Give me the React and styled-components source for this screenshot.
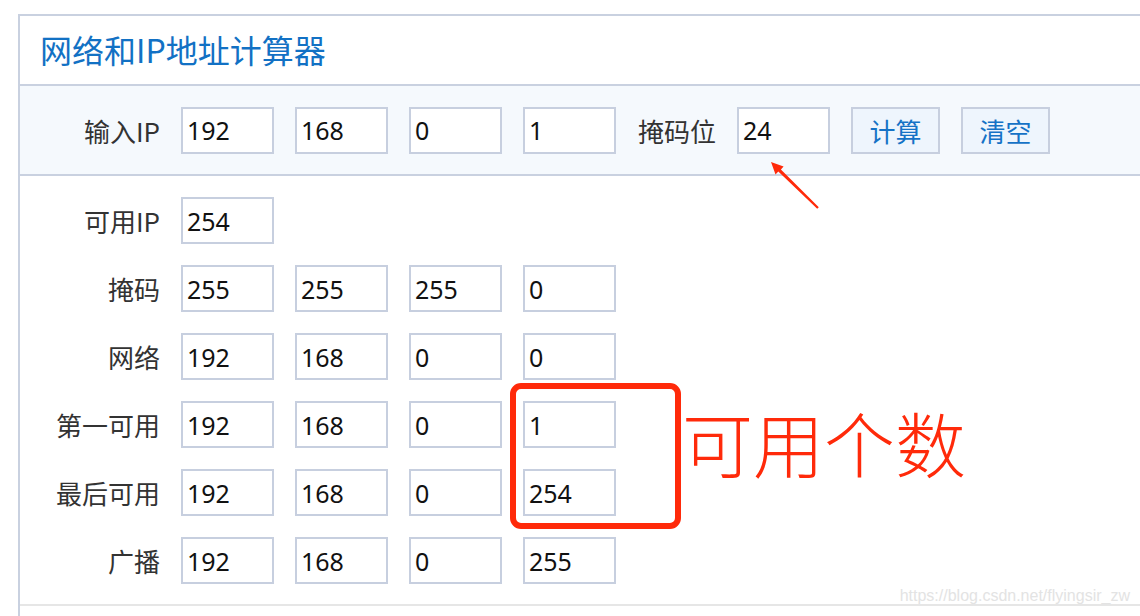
import React from 'react';
import styled, { createGlobalStyle } from 'styled-components';

const GlobalStyle = createGlobalStyle`
  html, body {
    margin: 0;
    padding: 0;
    background: #ffffff;
  }
  body {
    font-family: "Noto Sans CJK SC", "Noto Sans", sans-serif;
  }
  * {
    box-sizing: border-box;
  }
`;

const ipRows = [
  { label: '可用IP', values: ['254'] },
  { label: '掩码', values: ['255', '255', '255', '0'] },
  { label: '网络', values: ['192', '168', '0', '0'] },
  { label: '第一可用', values: ['192', '168', '0', '1'] },
  { label: '最后可用', values: ['192', '168', '0', '254'] },
  { label: '广播', values: ['192', '168', '0', '255'] },
];

function ArrowMark() {
  // hand-drawn red pointer towards the mask input
  return (
    <ArrowSvg width="70" height="65" viewBox="0 0 70 65">
      <polygon
        points="11,7 23.6,11.4 20.9,14.4 58.8,52.2 57.2,53.8 18.3,16.6 15.5,19.4"
        fill="#ff2a0a"
      />
    </ArrowSvg>
  );
}

export default function App() {
  return (
    <Page>
      <GlobalStyle />
      <Panel>
        <TitleBar>网络和IP地址计算器</TitleBar>

        <InputBar>
          <Label>输入IP</Label>
          <Field defaultValue="192" />
          <Field defaultValue="168" />
          <Field defaultValue="0" />
          <Field defaultValue="1" />
          <Label auto>掩码位</Label>
          <Field defaultValue="24" />
          <Button>计算</Button>
          <Button>清空</Button>
        </InputBar>

        <Results>
          {ipRows.map((row) => (
            <Row key={row.label}>
              <Label>{row.label}</Label>
              {row.values.map((v, i) => (
                <Field key={i} value={v} readOnly />
              ))}
            </Row>
          ))}
        </Results>
      </Panel>

      {/* annotations drawn on top of the screenshot */}
      <RedBox />
      <RedNote>可用个数</RedNote>
      <ArrowMark />
      <Watermark>https://blog.csdn.net/flyingsir_zw</Watermark>
    </Page>
  );
}

const Page = styled.div`
  position: relative;
  width: 1140px;
  height: 616px;
  overflow: hidden;
  padding: 14px 0 0 18px;
`;

const Panel = styled.div`
  border-top: 2px solid #c9d1e0;
  border-left: 2px solid #c9d1e0;
  height: 620px;
`;

const TitleBar = styled.div`
  height: 68px;
  display: flex;
  align-items: center;
  padding-left: 20px;
  padding-bottom: 2px;
  font-size: 32px;
  color: #1271c4;
`;

const InputBar = styled.div`
  height: 92px;
  display: flex;
  align-items: center;
  gap: 21px;
  background: #f5f9fd;
  border-top: 2px solid #c9d1e0;
  border-bottom: 2px solid #c9d1e0;
`;

const Results = styled.div`
  display: flex;
  flex-direction: column;
  gap: 21px;
  padding: 21px 0 20px;
  border-bottom: 2px solid #e6e6e6;
`;

const Row = styled.div`
  display: flex;
  align-items: center;
  gap: 21px;
`;

const Label = styled.span`
  width: ${(p) => (p.auto ? 'auto' : '140px')};
  margin-left: ${(p) => (p.auto ? '1px' : '0')};
  text-align: right;
  font-size: 26px;
  line-height: 47px;
  color: #333333;
  white-space: nowrap;
`;

const Field = styled.input`
  width: 93px;
  height: 47px;
  margin: 0;
  padding: 0 0 0 4px;
  border: 2px solid #c7cfdf;
  border-radius: 0;
  background: #ffffff;
  font-family: "Noto Sans", "Noto Sans CJK SC", sans-serif;
  font-size: 25px;
  color: #111111;
  outline: none;
`;

const Button = styled.button`
  width: 89px;
  height: 47px;
  margin: 0;
  padding: 0;
  border: 2px solid #c7cfdf;
  border-radius: 0;
  background: #eef5fd;
  font-family: "Noto Sans CJK SC", sans-serif;
  font-size: 26px;
  color: #1572c6;
  cursor: pointer;
`;

const RedBox = styled.div`
  position: absolute;
  left: 510px;
  top: 383px;
  width: 171px;
  height: 146px;
  border: 6px solid #ff2a0a;
  border-radius: 11px;
`;

const RedNote = styled.div`
  position: absolute;
  left: 682px;
  top: 406px;
  font-size: 71px;
  line-height: 71px;
  font-weight: 300;
  color: #ff2a0a;
  white-space: nowrap;
`;

const ArrowSvg = styled.svg`
  position: absolute;
  left: 760px;
  top: 155px;
`;

const Watermark = styled.div`
  position: absolute;
  right: 10px;
  top: 587px;
  font-family: "Liberation Sans", Arial, sans-serif;
  font-size: 16px;
  line-height: 18px;
  color: #e3e3e3;
  white-space: nowrap;
`;
